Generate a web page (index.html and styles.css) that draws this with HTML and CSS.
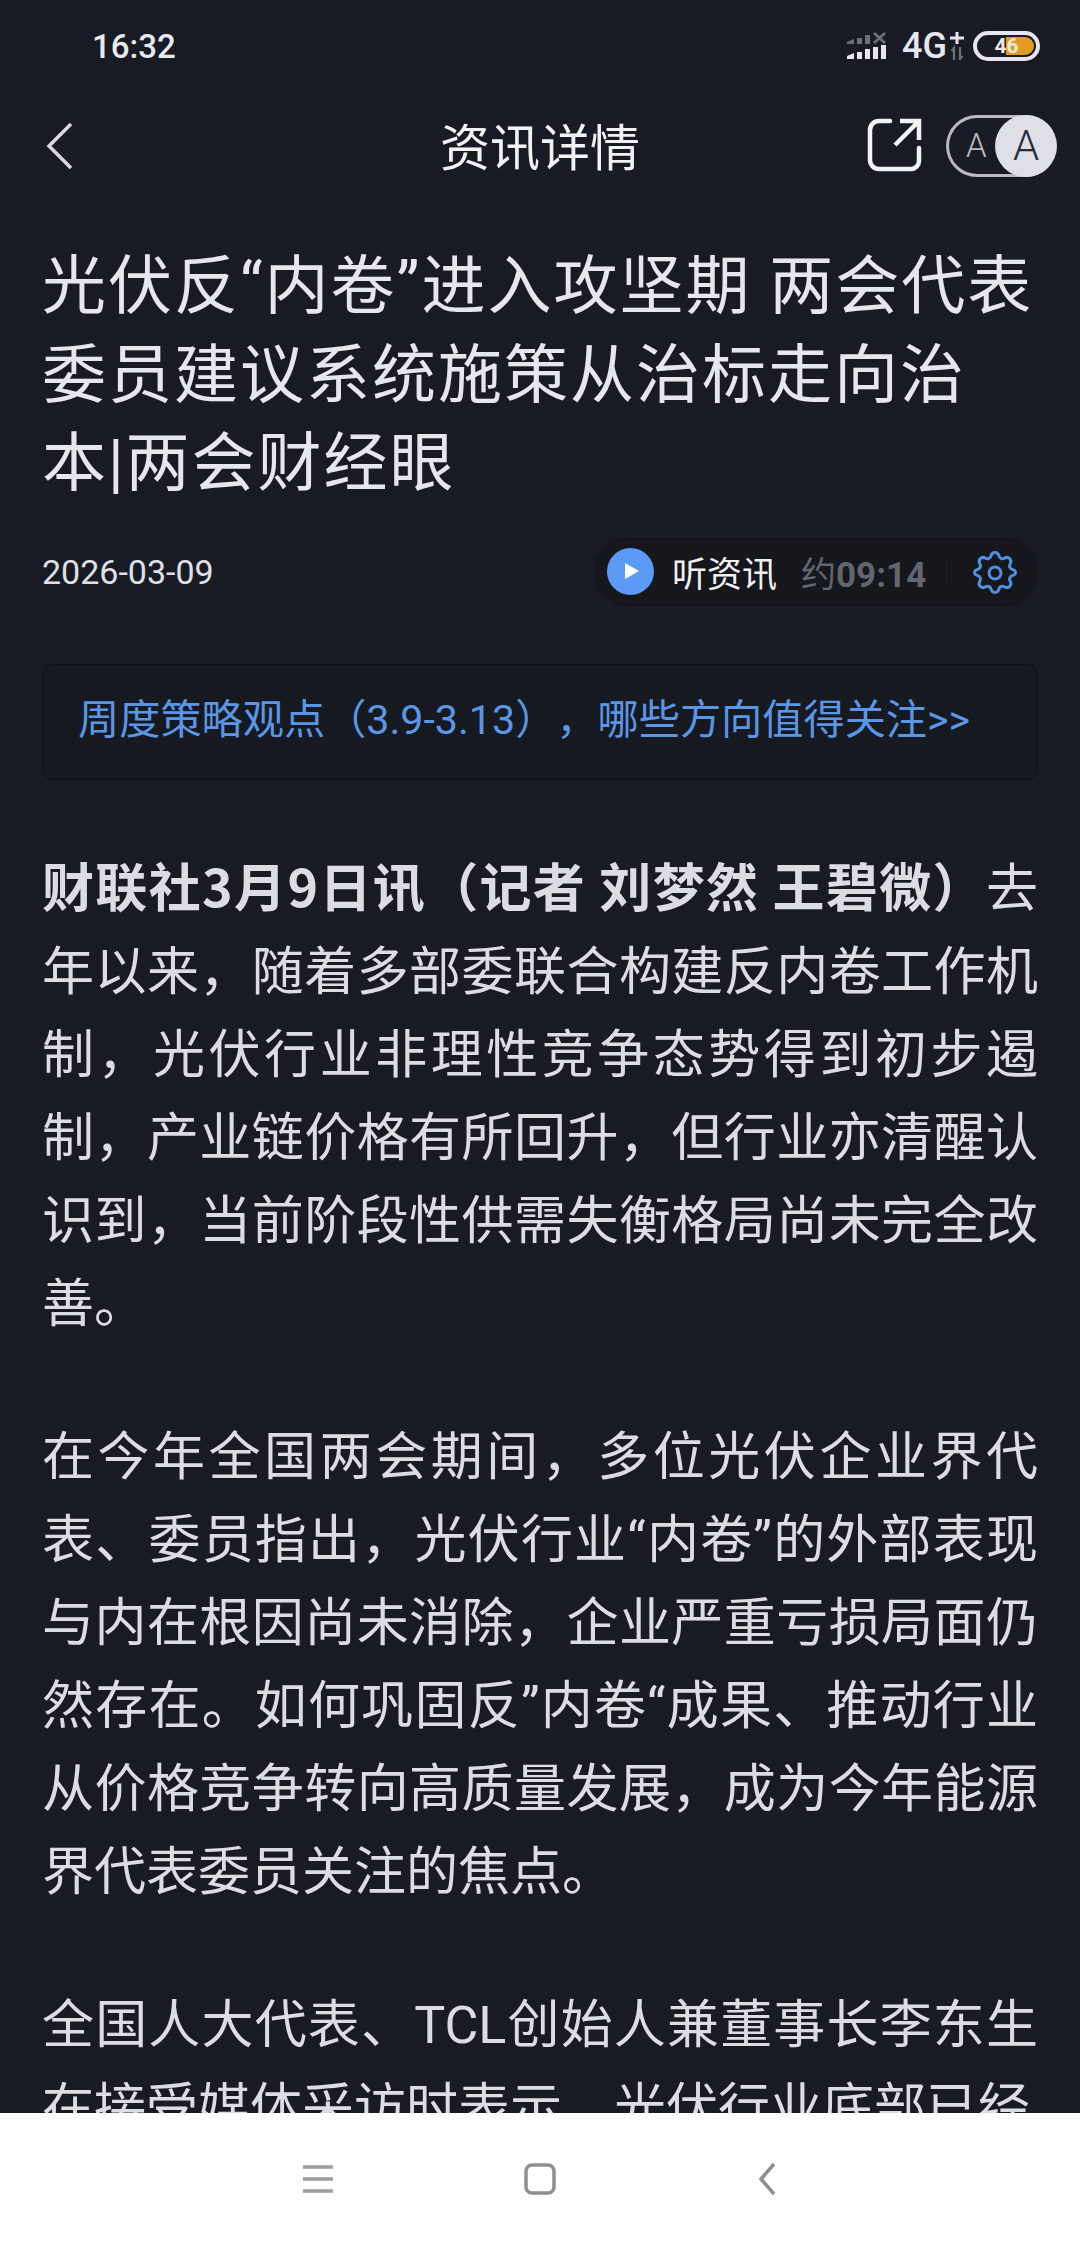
FILE: index.html
```html
<!DOCTYPE html>
<html lang="zh-CN">
<head>
  <meta charset="UTF-8" />
  <meta name="viewport" content="width=device-width, initial-scale=1.0"/>
  <title>资讯详情</title>
  <link rel="stylesheet" href="styles.css">
</head>
<body>
  <div class="phone">
    <div class="status-bar">
      <span class="clock">16:32</span>
      <div class="status-icons">
        <svg class="signal" width="42" height="30" viewBox="0 0 42 30">
          <g fill="#6b6e76">
            <path d="M1 11l7-3v5H1zM11 7h5v6h-5zM19 4h5v9h-5z"/>
            <path d="M28 2l11 10M39 2L28 12" stroke="#6b6e76" stroke-width="3" fill="none"/>
          </g>
          <g fill="#e6e7ec">
            <path d="M1 25l7-3v6H1zM11 21h5v7h-5zM19 18h5v10h-5zM27 16h5v12h-5zM35 14h5v14h-5z"/>
          </g>
        </svg>
        <span class="net">4G</span>
        <svg class="net-extra" width="14" height="28" viewBox="0 0 14 28">
          <path d="M7 0v12M0 6h14" stroke="#e6e7ec" stroke-width="3" fill="none"/>
          <path d="M4 28V16l-2.500 3M10 15v12l2.500-3" stroke="#6b6e76" stroke-width="2.200" fill="none"/>
        </svg>
        <div class="battery">
          <div class="battery-fill"></div>
          <span class="battery-num">46</span>
        </div>
      </div>
    </div>

    <header class="top-bar">
      <svg class="back" width="30" height="50" viewBox="0 0 30 50">
        <path d="M27 3L5 25l22 22" stroke="#d9dae0" stroke-width="3.500" fill="none"/>
      </svg>
      <h2 class="page-title">资讯详情</h2>
      <svg class="share" width="56" height="56" viewBox="0 0 56 56">
        <path d="M24 4H13a9 9 0 0 0-9 9v30a9 9 0 0 0 9 9h32a8 8 0 0 0 8-8V31" stroke="#f2f2f5" stroke-width="4.500" fill="none" stroke-linecap="round"/>
        <path d="M29 28L52 5M34 4h19v19" stroke="#f2f2f5" stroke-width="4.500" fill="none"/>
      </svg>
      <div class="font-toggle">
        <span class="font-small">A</span>
        <span class="font-big">A</span>
      </div>
    </header>

    <main class="article">
      <h1 class="headline">光伏反“内卷”进入攻坚期 两会代表委员建议系统施策从治标走向治本|两会财经眼</h1>

      <div class="meta">
        <span class="date">2026-03-09</span>
        <div class="listen">
          <span class="play"></span>
          <span class="listen-label">听资讯</span>
          <span class="listen-time">约<b>09:14</b></span>
          <span class="listen-divider"></span>
          <svg class="gear" width="44" height="44" viewBox="0 0 44 44">
            <path d="M22 2.500c2.500 0 3.500 1.500 4 3.500.600 2.400 3.300 3.500 5.400 2.200 1.800-1.100 3.600-1.300 5.300.4 1.700 1.800 1.500 3.600.4 5.400-1.300 2.100-.2 4.800 2.200 5.400 2 .500 3.200 1.500 3.200 3.100s-1.200 2.600-3.200 3.100c-2.400.600-3.500 3.300-2.200 5.400 1.100 1.800 1.300 3.600-.4 5.400-1.700 1.700-3.500 1.500-5.300.4-2.100-1.300-4.800-.2-5.400 2.200-.500 2-1.500 3.500-4 3.500s-3.500-1.500-4-3.500c-.600-2.400-3.300-3.500-5.400-2.200-1.800 1.100-3.600 1.300-5.300-.4-1.700-1.800-1.500-3.600-.4-5.400 1.300-2.100.2-4.800-2.200-5.400-2-.500-3.200-1.500-3.200-3.100s1.200-2.600 3.200-3.100c2.400-.600 3.500-3.300 2.200-5.400-1.100-1.800-1.300-3.600.4-5.400 1.700-1.700 3.500-1.500 5.300-.4 2.100 1.300 4.800.2 5.400-2.200.500-2 1.500-3.500 4-3.500z" stroke="#4f8fdf" stroke-width="3" fill="none"/>
            <circle cx="22" cy="23" r="6" stroke="#4f8fdf" stroke-width="3" fill="none"/>
          </svg>
        </div>
      </div>

      <a class="promo">周度策略观点（3.9-3.13），哪些方向值得关注&gt;&gt;</a>

      <p class="para"><strong>财联社3月9日讯（记者 刘梦然 王碧微）</strong>去年以来，随着多部委联合构建反内卷工作机制，光伏行业非理性竞争态势得到初步遏制，产业链价格有所回升，但行业亦清醒认识到，当前阶段性供需失衡格局尚未完全改善。</p>
      <p class="para">在今年全国两会期间，多位光伏企业界代表、委员指出，光伏行业“内卷”的外部表现与内在根因尚未消除，企业严重亏损局面仍然存在。如何巩固反”内卷“成果、推动行业从价格竞争转向高质量发展，成为今年能源界代表委员关注的焦点。</p>
      <p class="para">全国人大代表、TCL创始人兼董事长李东生在接受媒体采访时表示，光伏行业底部已经</p>
    </main>

    <nav class="nav-bar">
      <svg width="32" height="30" viewBox="0 0 32 30">
        <path d="M1 3h30M1 15h30M1 27h30" stroke="#9b9b9b" stroke-width="3.500" fill="none"/>
      </svg>
      <svg width="32" height="32" viewBox="0 0 32 32">
        <rect x="2" y="2" width="28" height="28" rx="6" stroke="#8f8f8f" stroke-width="3.500" fill="none"/>
      </svg>
      <svg class="nav-back" width="18" height="34" viewBox="0 0 18 34">
        <path d="M16 2L3 17l13 15" stroke="#8f8f8f" stroke-width="3.500" fill="none"/>
      </svg>
    </nav>
  </div>
</body>
</html>
```

FILE: styles.css
```css
* {
  box-sizing: border-box;
}

html, body {
  margin: 0;
  padding: 0;
}

body {
  font-family: Roboto, "Noto Sans CJK SC", sans-serif;
  text-spacing-trim: space-all;
  background-color: #181b24;
  color: #dcdde3;
}

.phone {
  width: 1080px;
  height: 2244px;
  display: flex;
  flex-direction: column;
  overflow: hidden;
}

/* status bar */
.status-bar {
  height: 92px;
  flex: none;
  display: flex;
  align-items: center;
  justify-content: space-between;
  padding: 0 40px 0 92px;
}

.clock {
  font-size: 33px;
  font-weight: 500;
  color: #e8e9ed;
}

.status-icons {
  display: flex;
  align-items: center;
  gap: 5px;
}

.net {
  font-size: 36px;
  font-weight: 500;
  color: #e6e7ec;
  margin-left: 9px;
  margin-right: -2px;
}

.battery {
  position: relative;
  width: 67px;
  height: 30px;
  margin-left: 4px;
  border: 4px solid #e6e7ec;
  border-radius: 15px;
  overflow: hidden;
}

.battery-fill {
  position: absolute;
  top: 2px;
  bottom: 2px;
  right: 2px;
  width: 28px;
  border-radius: 0 10px 10px 0;
  background-color: #e39c22;
}

.battery-num {
  position: relative;
  display: block;
  text-align: center;
  font-size: 21px;
  font-weight: 700;
  line-height: 22px;
  color: #ece8da;
}

/* header */
.top-bar {
  position: relative;
  height: 104px;
  flex: none;
  display: flex;
  align-items: center;
  padding: 0 24px 0 44px;
}

.page-title {
  position: absolute;
  left: 0;
  right: 0;
  margin: 0;
  text-align: center;
  font-size: 50px;
  font-weight: 400;
  color: #f2f2f5;
  pointer-events: none;
}

.back {
  margin-top: 4px;
}

.share {
  margin-left: auto;
  margin-top: 2px;
  margin-right: 2px;
}

.font-toggle {
  width: 110px;
  height: 62px;
  margin-left: 22px;
  margin-top: 3px;
  display: flex;
  align-items: center;
  justify-content: space-between;
  border: 3px solid #b9bac0;
  border-right: none;
  border-radius: 31px;
  font-weight: 300;
}

.font-small {
  margin-left: 17px;
  font-size: 33px;
  color: #b9bac0;
}

.font-big {
  width: 62px;
  height: 62px;
  margin-right: -1px;
  border-radius: 50%;
  background-color: #dfe0e7;
  color: #2a2d38;
  font-size: 42px;
  line-height: 62px;
  text-align: center;
}

/* article */
.article {
  flex: 1;
  min-height: 0;
  overflow: hidden;
  padding: 47px 42px 0;
}

.headline {
  margin: 0;
  font-size: 64px;
  font-weight: 400;
  line-height: 88.500px;
  letter-spacing: 2px;
  color: #e6e7ec;
}

.meta {
  display: flex;
  align-items: center;
  justify-content: space-between;
  margin-top: 29px;
}

.date {
  font-size: 34px;
  color: #dfe0e7;
}

.listen {
  width: 444px;
  height: 68px;
  display: flex;
  align-items: center;
  padding: 0 20px 0 12px;
  border: 1px solid #12141a;
  border-radius: 34px;
  background-color: #15171d;
}

.play {
  position: relative;
  width: 47px;
  height: 47px;
  flex: none;
  border-radius: 50%;
  background-color: #5b9bf5;
}

.play::after {
  content: "";
  position: absolute;
  left: 18px;
  top: 15px;
  border-left: 14px solid #fff;
  border-top: 8px solid transparent;
  border-bottom: 8px solid transparent;
}

.listen-label {
  margin-left: 18px;
  font-size: 35px;
  color: #f0f0f3;
}

.listen-time {
  margin-left: 24px;
  font-size: 35px;
  color: #62646e;
}

.listen-time b {
  font-weight: 700;
}

.listen-divider {
  width: 1px;
  height: 28px;
  margin-left: 20px;
  background-color: #1c1e25;
}

.gear {
  margin-left: auto;
}

.promo {
  display: block;
  height: 116px;
  margin-top: 58px;
  margin-bottom: 63px;
  padding: 0 35px;
  border: 1px solid #101216;
  border-radius: 10px;
  background-color: #16191f;
  font-size: 41.200px;
  line-height: 110px;
  color: #5a96e6;
}

.para {
  margin: 0 0 70px;
  font-size: 52px;
  line-height: 83px;
  text-align: justify;
  color: #dcdde3;
}

.para strong {
  font-family: "Noto Sans CJK SC", sans-serif;
  font-weight: 700;
}

/* bottom nav */
.nav-bar {
  height: 131px;
  flex: none;
  display: flex;
  align-items: center;
  gap: 190px;
  background-color: #fff;
  padding-left: 302px;
}

.nav-back {
  margin-left: 12px;
}
```
